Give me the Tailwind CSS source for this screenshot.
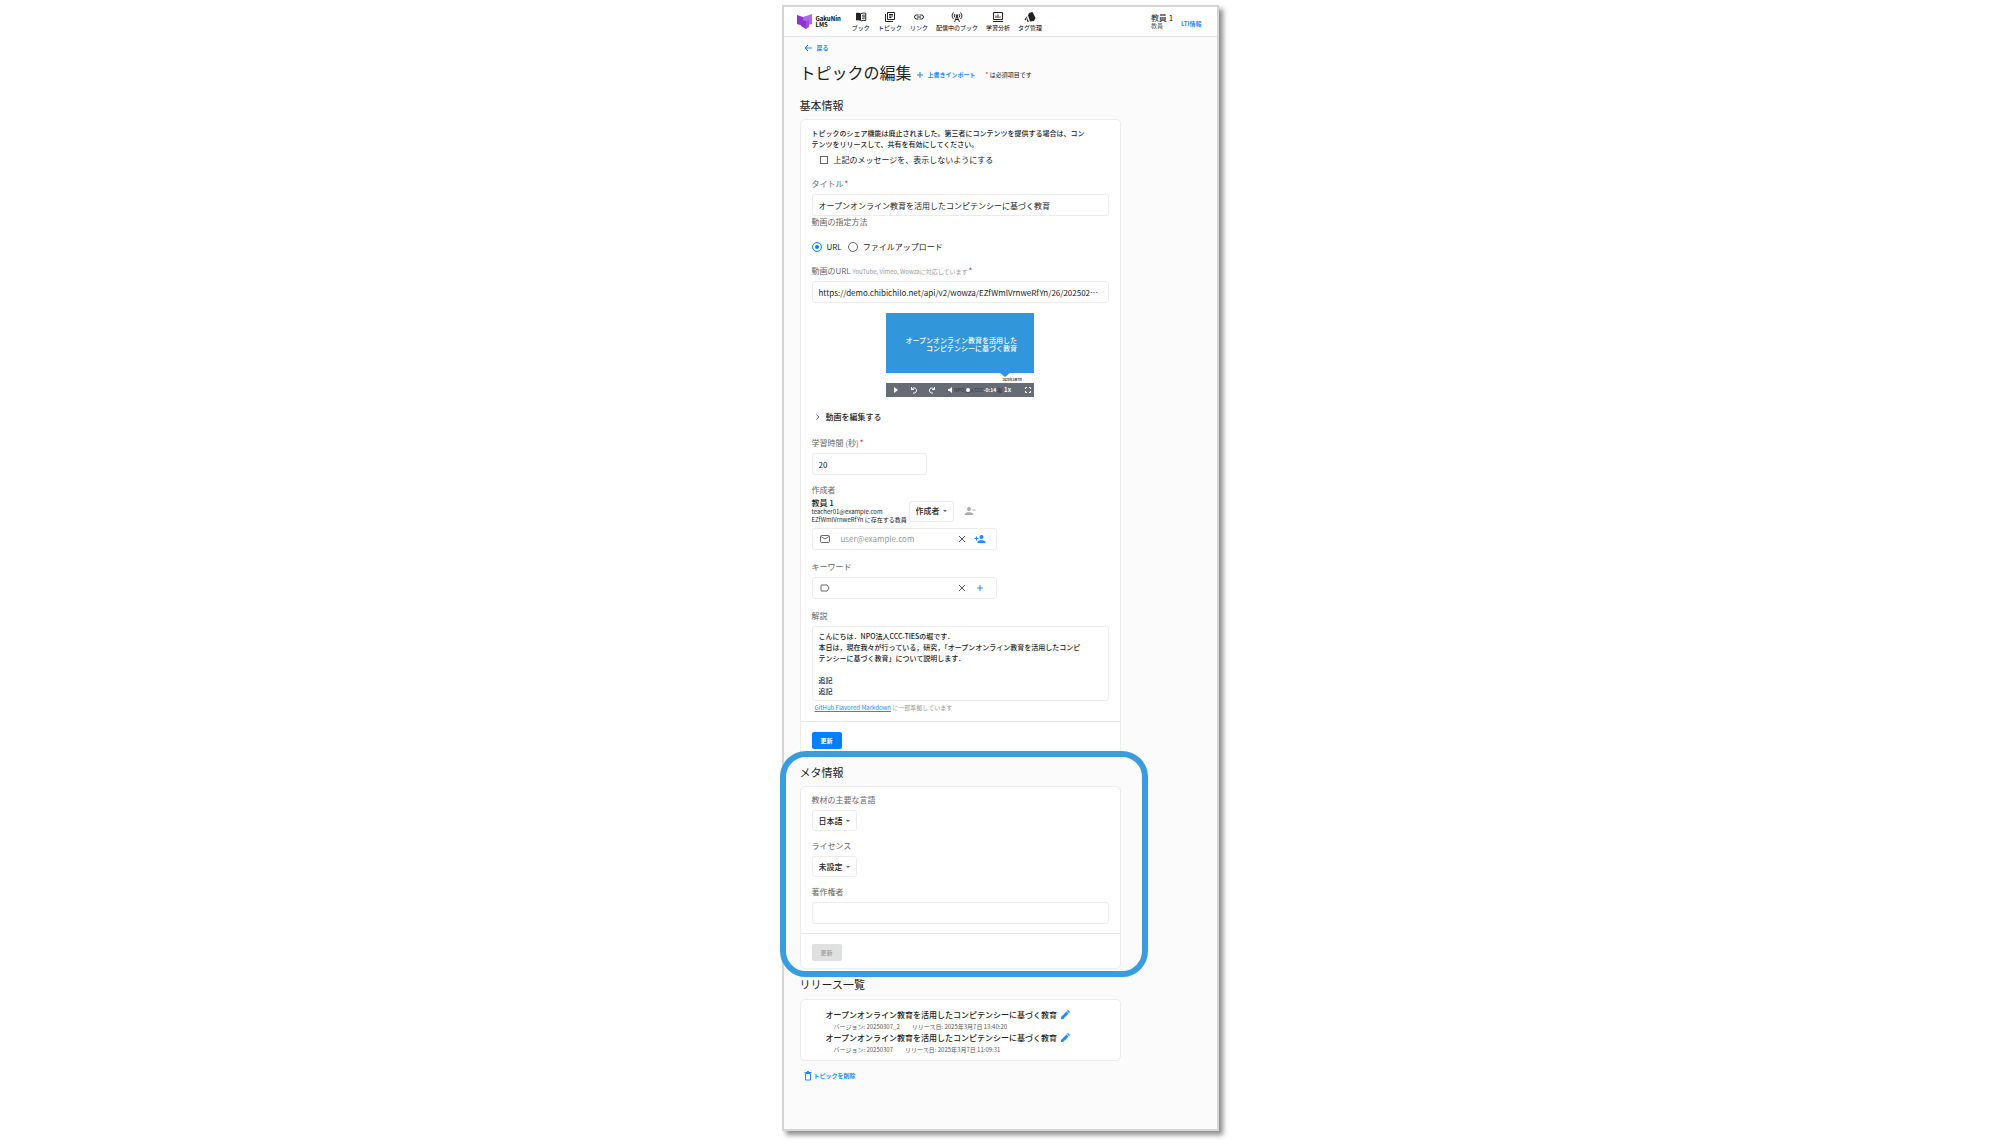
<!DOCTYPE html>
<html lang="ja">
<head>
<meta charset="utf-8">
<meta name="viewport" content="width=device-width, initial-scale=1">
<title>トピックの編集 - GakuNin LMS</title>
<script src="https://cdn.jsdelivr.net/npm/@tailwindcss/browser@4"></script>
</head>
<body class="bg-white font-['Noto_Sans_CJK_JP',sans-serif] text-[8px] leading-[12px] text-[#222]">
<div class="px-2 pt-[5px] pb-3.5">
<div class="mx-auto w-full max-w-[437px] border-2 border-[#d5d5d5] bg-[#fbfbfb] pb-[47px] shadow-[4px_4px_5px_rgba(0,0,0,0.45)]">

  <header class="flex h-[30px] items-center border-b border-[#e3e3e3] bg-white pr-[15px] pl-[13px]">
    <a href="#" class="flex items-center gap-[3px] text-[6px] leading-[6px] font-bold text-black">
      <svg class="size-4" viewBox="0 0 16 16"><path d="M0 1 6 3V12L0 10Z" fill="#9333d6"/><path d="M6 3 15 0V10L6 12Z" fill="#b26be6"/><path d="M4 5 9 7V15L4 12Z" fill="#8a35d2"/><path d="M9 7 12 6V13L9 15Z" fill="#a04be0"/></svg>
      <span>GakuNin<br>LMS</span>
    </a>
    <nav class="ml-[11px] flex gap-2 text-[6px] leading-[10px] whitespace-nowrap text-black">
      <a href="#" class="flex flex-col items-center"><svg class="size-3" viewBox="0 0 24 24"><path fill="#222" d="M12 5C10 3.5 7 3.3 2 4v15c4-.6 7-.4 10 1Z"/><path fill="none" stroke="#222" stroke-width="2" d="M12 5.500c3-1.500 6-1.500 9.500-.8V19c-4-.5-7-.3-9.500 1M14.500 9c2-.8 3-.8 5-.6M14.500 12c2-.8 3-.8 5-.6M14.500 15c2-.8 3-.8 5-.6"/></svg>ブック</a>
      <a href="#" class="flex flex-col items-center"><svg class="size-3" viewBox="0 0 24 24" fill="none" stroke="#222" stroke-width="2"><path d="M7 3h14v14H7ZM3 6v15h15M10 7h8M10 10h8M10 13h5"/></svg>トピック</a>
      <a href="#" class="flex flex-col items-center"><svg class="size-3" viewBox="0 0 24 24" fill="none" stroke="#222" stroke-width="2"><path d="M11 8H7a4 4 0 0 0 0 8h4M13 8h4a4 4 0 0 1 0 8h-4M8 12h8"/></svg>リンク</a>
      <a href="#" class="flex flex-col items-center"><svg class="size-3" viewBox="0 0 24 24" fill="none" stroke="#222" stroke-width="2"><path d="M5 3a9 9 0 0 0 0 13M19 3a9 9 0 0 1 0 13M8 6a5 5 0 0 0 0 7M16 6a5 5 0 0 1 0 7M12 10 7 22M12 10l5 12M9 17h6"/><circle cx="12" cy="9" r="1.500" fill="#222"/></svg>配信中のブック</a>
      <a href="#" class="flex flex-col items-center"><svg class="size-3" viewBox="0 0 24 24" fill="none" stroke="#222" stroke-width="2"><path d="M3 3h18v14H3ZM2 21h20M8 9v5M12 7v7M16 11v3"/></svg>学習分析</a>
      <a href="#" class="flex flex-col items-center"><svg class="size-3" viewBox="0 0 24 24" fill="#222"><path d="M10 4 17 2l6 12-3 6-8 1L8 9Z"/><path d="M7 9 1 17l3 2ZM6 14v7l4 1Z"/></svg>タグ管理</a>
    </nav>
    <div class="ml-auto flex items-end gap-2">
      <div class="whitespace-nowrap"><p class="text-[8px] leading-[9px]">教員 1</p><p class="text-[6px] leading-[8px] text-[#555]">教員</p></div>
      <a href="#" class="pb-px text-[6px] leading-[10px] font-bold text-[#1a8cff]">LTI情報</a>
    </div>
  </header>

  <main class="px-4">
    <a href="#" class="ml-1 flex h-[22px] items-center gap-[5px] text-[6px] font-bold text-[#1a8cff]">
      <svg class="size-2" viewBox="0 0 8 8" fill="none" stroke="#1a8cff"><path d="M8 4H1M4 1 1 4l3 3"/></svg>戻る
    </a>
    <div class="flex h-[27px] items-center whitespace-nowrap">
      <h1 class="text-[16px] leading-[27px]">トピックの編集</h1>
      <button type="button" class="ml-1 flex items-center gap-1 pt-1 text-[6px] leading-[10px] font-bold text-[#1a8cff]"><svg class="size-2" viewBox="0 0 8 8" stroke="#1a8cff"><path d="M4 1v6M1 4h6"/></svg>上書きインポート</button>
      <p class="ml-2.5 pt-1 text-[6px] leading-[10px]"><span class="text-red-600">*</span> は必須項目です</p>
    </div>

    <section class="max-w-[321px]">
      <h2 class="mt-[9px] text-[11px] leading-[20px]">基本情報</h2>
      <form class="mt-1 rounded-[5px] border border-[#ececec] bg-white pt-2">
        <div class="px-[11px]">
          <p class="text-[7px] leading-[11px] font-medium">トピックのシェア機能は廃止されました。第三者にコンテンツを提供する場合は、コン<br>テンツをリリースして、共有を有効にしてください。</p>
          <label class="mt-[3px] ml-2 flex h-3.5 items-center gap-1.5 text-[8px]"><input type="checkbox" class="size-2 appearance-none border border-[#666] bg-white">上記のメッセージを、表示しないようにする</label>

          <label for="title" class="mt-[11px] block h-3 text-[#666]">タイトル<span class="ml-px text-red-600">*</span></label>
          <input id="title" type="text" value="オープンオンライン教育を活用したコンピテンシーに基づく教育" class="mt-1 block h-[22px] w-full rounded-[3px] border border-[#ececec] px-1.5">

          <fieldset>
            <legend class="h-3 text-[#666]">動画の指定方法</legend>
            <div class="mt-[13px] flex h-3 items-center">
              <label class="flex items-center gap-[5px]"><input type="radio" name="source" checked class="size-2.5 appearance-none rounded-full border border-[#1a8cff] bg-[#0080ff] shadow-[inset_0_0_0_2px_#fff]">URL</label>
              <label class="ml-1.5 flex items-center gap-[5px]"><input type="radio" name="source" class="size-2.5 appearance-none rounded-full border border-[#666]">ファイルアップロード</label>
            </div>
          </fieldset>

          <label for="url" class="mt-3 block h-3 text-[#666]">動画のURL <span class="text-[6px] text-[#999]">YouTube, Vimeo, Wowzaに対応しています</span><span class="ml-px text-red-600">*</span></label>
          <input id="url" type="text" value="https://demo.chibichilo.net/api/v2/wowza/EZfWmlVrnweRfYn/26/202502…" class="mt-1 block h-[22px] w-full rounded-[3px] border border-[#ececec] px-1.5">

          <div class="mx-auto mt-[10px] flex h-[84px] w-[148px] flex-col bg-white">
            <div class="relative flex h-[60px] items-center justify-end bg-[#3296db] pr-[17px] text-right text-[7px] leading-[8px] font-medium whitespace-nowrap text-white">
              <p class="pt-0.5">オープンオンライン教育を活用した<br>コンピテンシーに基づく教育</p>
              <svg class="absolute top-full right-6 h-1 w-2.5" viewBox="0 0 10 4"><path d="M0 0h10L5 4Z" fill="#3296db"/></svg>
            </div>
            <p class="h-2.5 pt-1 pr-3 text-right text-[3px] leading-[6px] font-bold">2025年3月7日</p>
            <div class="flex h-3.5 items-center bg-[#666b76] pr-[3px] pl-1.5 text-[5px] text-white">
              <button type="button" aria-label="再生"><svg class="size-2" viewBox="0 0 8 8"><path d="M2 1v6l4-3Z" fill="#fff"/></svg></button>
              <button type="button" aria-label="戻す" class="ml-2.5"><svg class="size-2" viewBox="0 0 8 8" fill="none" stroke="#fff"><path d="M1.500 3.500C4 0 8 3 6 6Q5 7.500 3 7M1.500 1v2.500H4"/></svg></button>
              <button type="button" aria-label="進める" class="ml-2.5"><svg class="size-2" viewBox="0 0 8 8" fill="none" stroke="#fff"><path d="M6.500 3.500C4 0 0 3 2 6Q3 7.500 5 7M6.500 1v2.500H4"/></svg></button>
              <button type="button" aria-label="音量" class="ml-2.5"><svg class="size-2" viewBox="0 0 8 8"><path d="M2 3v2h1.500L6 7V1L3.500 3Z" fill="#fff"/></svg></button>
              <div class="relative flex h-3.5 items-center whitespace-nowrap">
                <span class="text-[#343943]">NPO法人CCC</span>
                <span class="absolute left-3 size-1 rounded-full bg-white"></span>
              </div>
              <span class="font-bold">-0:14</span><span class="ml-px text-[#2d3139]">堀</span><span class="ml-0.5 text-[6px] font-bold">1x</span>
              <button type="button" aria-label="全画面" class="ml-auto"><svg class="size-1.5" viewBox="0 0 6 6" fill="none" stroke="#fff"><path d="M.5 2V.5H2M4 .5h1.500V2M5.500 4v1.500H4M2 5.500H.5V4"/></svg></button>
            </div>
          </div>

          <button type="button" class="mt-3.5 ml-1 flex h-3 items-center gap-1.5 font-medium"><svg class="h-1.5 w-1" viewBox="0 0 4 6" fill="none" stroke="#777"><path d="m.5.5 2.500 2.500L.5 5.500"/></svg>動画を編集する</button>

          <label for="time" class="mt-3.5 block h-3 text-[#666]">学習時間 (秒)<span class="ml-px text-red-600">*</span></label>
          <input id="time" type="text" value="20" class="mt-1 block h-[22px] w-[115px] rounded-[3px] border border-[#ececec] px-1.5">

          <label for="role" class="mt-[9px] block h-3 text-[#666]">作成者</label>
          <div class="mt-0.5 flex h-[26px] items-center">
            <div class="w-[97px] text-[6px] leading-[8px] whitespace-nowrap"><p class="text-[8px] leading-[10px] font-medium">教員 1</p><p>teacher01@example.com</p><p>EZfWmlVrnweRfYn に存在する教員</p></div>
            <div class="relative flex items-center">
              <select id="role" class="h-[21px] w-[45px] appearance-none rounded-[3px] border border-[#ececec] bg-white pl-1.5 font-medium"><option>作成者</option></select>
              <svg class="pointer-events-none absolute right-[7px] h-0.5 w-1" viewBox="0 0 4 2"><path d="M0 0h4L2 2Z" fill="#666"/></svg>
            </div>
            <button type="button" aria-label="作成者を削除" class="ml-2.5"><svg class="size-3" viewBox="0 0 24 24" fill="#aaa"><circle cx="10" cy="8" r="4"/><path d="M2 20v-2c0-5 16-5 16 0v2ZM17 9h6v2h-6Z"/></svg></button>
          </div>
          <div class="mt-1 flex h-[22px] w-[185px] items-center rounded-[3px] border border-[#ececec] pr-2.5 pl-[7px]">
            <svg class="h-2 w-2.5" viewBox="0 0 10 8" fill="none" stroke="#666"><rect x=".5" y=".5" width="9" height="7" rx="1"/><path d="m1 1.500 4 2.500 4-2.500"/></svg>
            <input type="email" aria-label="メールアドレス" placeholder="user@example.com" class="ml-[11px] min-w-0 flex-1 placeholder:text-[#999]">
            <button type="button" aria-label="消去"><svg class="size-2" viewBox="0 0 8 8" stroke="#555"><path d="m1 1 6 6M7 1 1 7"/></svg></button>
            <button type="button" aria-label="作成者を追加" class="ml-2"><svg class="size-3" viewBox="0 0 24 24" fill="#1a8cff"><circle cx="15" cy="8" r="4"/><path d="M7 20v-2c0-5 16-5 16 0v2ZM4 7h2v3h3v2H6v3H4v-3H1v-2h3Z"/></svg></button>
          </div>

          <label for="keyword" class="mt-[11px] block h-3 text-[#666]">キーワード</label>
          <div class="mt-1 flex h-[22px] w-[185px] items-center rounded-[3px] border border-[#ececec] pr-3 pl-[7px]">
            <svg class="h-2 w-2.5" viewBox="0 0 10 8" fill="none" stroke="#666"><path d="M1 1.500q0-.5.5-.5H7l2 3-2 3H1.500Q1 7 1 6.500Z"/></svg>
            <input id="keyword" type="text" class="ml-[11px] min-w-0 flex-1">
            <button type="button" aria-label="消去"><svg class="size-2" viewBox="0 0 8 8" stroke="#555"><path d="m1 1 6 6M7 1 1 7"/></svg></button>
            <button type="button" aria-label="キーワードを追加" class="ml-2.5"><svg class="size-2" viewBox="0 0 8 8" stroke="#1a8cff"><path d="M4 1v6M1 4h6"/></svg></button>
          </div>

          <label for="description" class="mt-[11px] block h-3 text-[#666]">解説</label>
          <textarea id="description" class="mt-1 block h-[75px] w-full resize-none overflow-hidden rounded-[3px] border border-[#ececec] px-1.5 py-1 text-[7px] leading-[11px] font-medium whitespace-pre">こんにちは．NPO法人CCC-TIESの堀です．
本日は，現在我々が行っている，研究，「オープンオンライン教育を活用したコンピ
テンシーに基づく教育」について説明します．

追記
追記</textarea>
          <p class="mt-px ml-[3px] h-3 text-[6px] text-[#999]"><a href="#" class="text-[#1a8cff] underline">GitHub Flavored Markdown</a> に一部準拠しています</p>
        </div>
        <div class="mt-[7px] border-t border-[#e8e8e8] px-[11px] pt-2.5 pb-1.5">
          <button type="submit" class="block h-[17px] w-[30px] rounded-[2px] bg-[#0080ff] text-[6px] font-bold text-white">更新</button>
        </div>
      </form>
    </section>

    <section class="relative mt-1.5 max-w-[321px]">
      <div class="pointer-events-none absolute -top-[11px] -right-[27px] -bottom-2 -left-5 rounded-[26px] border-6 border-[#389dde]"></div>
      <h2 class="text-[11px] leading-[20px]">メタ情報</h2>
      <form class="mt-1 rounded-[5px] border border-[#ececec] bg-white pt-[7px]">
        <div class="px-[11px]">
          <label for="language" class="block h-3 text-[#666]">教材の主要な言語</label>
          <div class="relative mt-1 flex w-[45px] items-center">
            <select id="language" class="h-[21px] w-full appearance-none rounded-[3px] border border-[#ececec] bg-white pl-1.5 font-medium"><option>日本語</option></select>
            <svg class="pointer-events-none absolute right-[7px] h-0.5 w-1" viewBox="0 0 4 2"><path d="M0 0h4L2 2Z" fill="#666"/></svg>
          </div>
          <label for="license" class="mt-[9px] block h-3 text-[#666]">ライセンス</label>
          <div class="relative mt-1 flex w-[45px] items-center">
            <select id="license" class="h-[21px] w-full appearance-none rounded-[3px] border border-[#ececec] bg-white pl-1.5 font-medium"><option>未設定</option></select>
            <svg class="pointer-events-none absolute right-[7px] h-0.5 w-1" viewBox="0 0 4 2"><path d="M0 0h4L2 2Z" fill="#666"/></svg>
          </div>
          <label for="copyright" class="mt-[9px] block h-3 text-[#666]">著作権者</label>
          <input id="copyright" type="text" class="mt-1 block h-[22px] w-full rounded-[3px] border border-[#ececec] px-1.5">
        </div>
        <div class="mt-[9px] border-t border-[#e8e8e8] px-[11px] pt-2.5 pb-[7px]">
          <button type="submit" disabled class="block h-[17px] w-[30px] rounded-[2px] bg-[#e0e0e0] text-[6px] font-bold text-[#a6a6a6]">更新</button>
        </div>
      </form>
    </section>

    <section class="max-w-[321px]">
      <h2 class="mt-[5px] text-[11px] leading-[20px]">リリース一覧</h2>
      <ul class="mt-[5px] rounded-[5px] border border-[#ececec] bg-white pt-[9px] pr-2.5 pb-[5px] pl-[25px] whitespace-nowrap">
        <li>
          <div class="flex h-3 items-center gap-[3px] font-medium">オープンオンライン教育を活用したコンピテンシーに基づく教育<button type="button" aria-label="編集"><svg class="size-2.5" viewBox="0 0 10 10" fill="#1a8cff"><path d="M1 9V7l5.500-5.500 2 2L3 9ZM7 1l1-1 2 2-1 1Z"/></svg></button></div>
          <p class="flex h-[11px] gap-3 pl-2 text-[6px] leading-[11px] text-[#555]"><span>バージョン: 20250307_2</span><span>リリース日: 2025年3月7日 13:40:20</span></p>
        </li>
        <li>
          <div class="flex h-3 items-center gap-[3px] font-medium">オープンオンライン教育を活用したコンピテンシーに基づく教育<button type="button" aria-label="編集"><svg class="size-2.5" viewBox="0 0 10 10" fill="#1a8cff"><path d="M1 9V7l5.500-5.500 2 2L3 9ZM7 1l1-1 2 2-1 1Z"/></svg></button></div>
          <p class="flex h-[11px] gap-3 pl-2 text-[6px] leading-[11px] text-[#555]"><span>バージョン: 20250307</span><span>リリース日: 2025年3月7日 11:09:31</span></p>
        </li>
      </ul>
    </section>
    <button type="button" class="mt-[9px] ml-1 flex h-3 items-center gap-0.5 text-[6px] font-bold text-[#1a8cff]"><svg class="h-2.5 w-2" viewBox="0 0 8 10" fill="none" stroke="#1a8cff"><path d="M1.500 2.500h5v6.500h-5ZM.5 1.500h7M3 .5h2"/></svg>トピックを削除</button>
  </main>
</div>
</div>
</body>
</html>
